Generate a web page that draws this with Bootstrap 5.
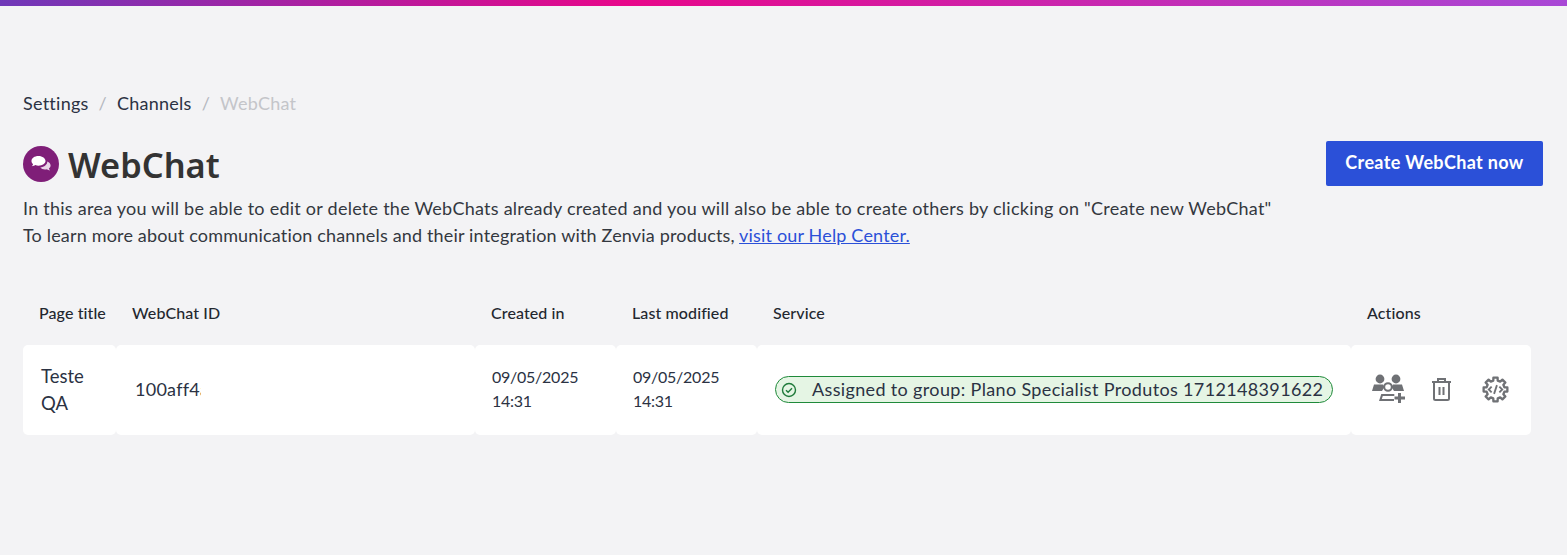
<!DOCTYPE html>
<html lang="en">
<head>
    <meta charset="UTF-8">
    <meta name="viewport" content="width=device-width, initial-scale=1.0">
    <title>WebChat</title>
    <link href="https://cdn.jsdelivr.net/npm/bootstrap@5.3.0/dist/css/bootstrap.min.css" rel="stylesheet">
    <style>
        html, body { height: 100%; }
        body { background: #f3f3f5; font-family: "Lato", "Noto Sans", sans-serif; color: #2b3243; overflow: hidden; }
        .top-strip { height: 6px; background: linear-gradient(90deg, #6f38b8 0%, #e8078a 40%, #a848d6 100%); }
        .page-area { padding: 86px 24px 0 23px; }
        .crumbs { font-size: 18px; letter-spacing: .25px; line-height: 22px; margin-bottom: 0; --bs-breadcrumb-divider-color: #b5b8bf; --bs-breadcrumb-item-padding-x: 10px; }
        .crumbs a { color: #2b3243; text-decoration: none; }
        .crumbs .active { color: #c4c5c9; }
        .head-row { margin-top: 27px; }
        .title-icon { width: 36px; height: 36px; border-radius: 50%; background: #7f1e78; flex: none; margin-top: 5px; }
        .title-text { font-family: "Noto Sans", sans-serif; font-size: 34.4px; font-weight: 600; line-height: 48px; color: #333; margin: 0 0 0 9px; }
        .btn-create { background: #2b50d8; border: 0; border-radius: 2px; color: #fff; font-weight: 700; font-size: 18px; letter-spacing: .35px; width: 217px; height: 45px; padding: 0 0 2px; }
        .intro { font-size: 18px; letter-spacing: .25px; line-height: 27px; color: #33383f; margin-top: 6px; }
        .intro-second { letter-spacing: .17px; }
        .intro a { color: #2b50d8; }
        .list-wrap { margin-top: 32px; width: 1508px; }
        .chan-table { table-layout: fixed; width: 1508px; margin: 0; --bs-table-bg: transparent; }
        .chan-table > :not(caption) > * > * { border: 0; box-shadow: none; }
        .chan-table th { font-size: 16px; letter-spacing: .1px; font-weight: 500; color: #23272f; padding: 0 0 0 16px; height: 64px; line-height: 24px; vertical-align: middle; }
        .chan-table td { background: #fff; height: 90px; padding: 0 18px; vertical-align: middle; font-size: 18.5px; line-height: 27px; color: #2b3243; border-radius: 5px; }
        .col-title { width: 93px; }
        .col-id { width: 359px; }
        .col-date { width: 141px; }
        .col-service { width: 594px; }
        .col-actions { width: 180px; }
        .chan-table td.id-cell { padding: 0 0 2px 19px; }
        .id-clip { display: block; width: 66px; overflow: hidden; white-space: nowrap; font-size: 18px; letter-spacing: .25px; }
        .chan-table td.date-cell { font-size: 16px; letter-spacing: -.25px; line-height: 24px; padding: 0 17px 2px; }
        .status-pill { display: flex; align-items: center; height: 27px; width: 558px; border: 1px solid #1f8a3a; border-radius: 14px; background: #e5f5e4; padding-left: 5px; font-size: 18px; letter-spacing: .35px; white-space: nowrap; margin-bottom: 1px; }
        .status-pill svg { margin-right: 15px; flex: none; }
        .chan-table td.act-cell { padding: 0 0 2px 20px; }
        .act-row { gap: 25px; }
        .act-gear { margin-left: 5px; }
    </style>
</head>
<body>
    <div class="top-strip"></div>
    <div class="page-area">
        <nav aria-label="breadcrumb">
            <ol class="breadcrumb crumbs">
                <li class="breadcrumb-item"><a href="#">Settings</a></li>
                <li class="breadcrumb-item"><a href="#">Channels</a></li>
                <li class="breadcrumb-item active" aria-current="page">WebChat</li>
            </ol>
        </nav>

        <div class="head-row d-flex justify-content-between align-items-start">
            <div class="d-flex align-items-start">
                <div class="title-icon d-flex align-items-center justify-content-center">
                    <svg width="24" height="20" viewBox="0 0 24 20">
                        <path d="M9.5 2C5.4 2 2.5 4.2 2.5 7c0 1.3.6 2.4 1.6 3.2-.3 1-1 1.700-1.300 2 1.300 0 2.600-.5 3.500-1.100 1 .4 2.100.6 3.200.6 4 0 7-2.200 7-4.700S13.500 2 9.500 2z" fill="#fff"/>
                        <path d="M18.300 7.600c.1 3-3 5.600-7 6 1 1.200 2.700 2 4.700 2 .7 0 1.400-.1 2-.3.7.6 1.800 1.100 3 1.100-.4-.4-.9-1.100-1.100-1.900 1.100-.8 1.700-1.800 1.700-3 0-1.700-1.400-3.200-3.300-3.900z" fill="#e9d4e8"/>
                    </svg>
                </div>
                <h1 class="title-text">WebChat</h1>
            </div>
            <button class="btn btn-create" type="button">Create WebChat now</button>
        </div>

        <div class="intro">
            In this area you will be able to edit or delete the WebChats already created and you will also be able to create others by clicking on "Create new WebChat"<br>
            <span class="intro-second">To learn more about communication channels and their integration with Zenvia products, <a href="#">visit our Help Center.</a></span>
        </div>

        <div class="list-wrap">
            <table class="table chan-table">
                <colgroup>
                    <col class="col-title">
                    <col class="col-id">
                    <col class="col-date">
                    <col class="col-date">
                    <col class="col-service">
                    <col class="col-actions">
                </colgroup>
                <thead>
                    <tr>
                        <th>Page title</th>
                        <th>WebChat ID</th>
                        <th>Created in</th>
                        <th>Last modified</th>
                        <th>Service</th>
                        <th>Actions</th>
                    </tr>
                </thead>
                <tbody>
                    <tr>
                        <td>Teste QA</td>
                        <td class="id-cell"><span class="id-clip">100aff4a7c2e</span></td>
                        <td class="date-cell">09/05/2025 14:31</td>
                        <td class="date-cell">09/05/2025 14:31</td>
                        <td>
                            <div class="status-pill">
                                <svg width="16" height="16" viewBox="0 0 16 16" fill="none">
                                    <circle cx="8" cy="8" r="6.5" stroke="#1f7a3a" stroke-width="1.4"/>
                                    <path d="M5 8.2l2.1 2.1L11 6.2" stroke="#1f7a3a" stroke-width="1.4"/>
                                </svg>
                                Assigned to group: Plano Specialist Produtos 1712148391622
                            </div>
                        </td>
                        <td class="act-cell">
                            <div class="d-flex align-items-center act-row">
                                <svg width="35" height="30" viewBox="0 0 35 30" fill="#6f7175">
                                    <circle cx="9" cy="5" r="4.4"/>
                                    <circle cx="25" cy="5" r="4.4"/>
                                    <path d="M1 17l2-6.500h9l1.500 2.500-2.500 4zM23 17l-2.500-4 1.500-2.500h9l2 6.500z"/>
                                    <circle cx="17" cy="13" r="3.800" fill="#fff" stroke="#6f7175" stroke-width="2"/>
                                    <path d="M8 27l2.300-7h13v2H11.800l-1 3H23v2z"/>
                                    <path d="M27 19h3v3.500h4v3h-4V29h-3v-3.500h-3.500v-3H27z"/>
                                </svg>
                                <svg width="21" height="24" viewBox="0 0 21 24" fill="none" stroke="#6f7175" stroke-width="2">
                                    <path d="M1 5h19M7 5V2h7v3M3 5v16.500A1.500 1.500 0 0 0 4.500 23h12a1.500 1.500 0 0 0 1.500-1.500V5M8.500 10v8M12.500 10v8"/>
                                </svg>
                                <svg class="act-gear" width="27" height="27" viewBox="-14 -14 28 28" fill="none" stroke="#6f7175">
                                    <path stroke-width="2.4" stroke-linejoin="round" d="M-2.3-9.22-2.17-12.31 2.17-12.31 2.3-9.22 4.89-8.15 7.17-10.24 10.24-7.17 8.15-4.89 9.22-2.3 12.31-2.17 12.31 2.17 9.22 2.3 8.15 4.89 10.24 7.17 7.17 10.24 4.89 8.15 2.3 9.22 2.17 12.31-2.17 12.31-2.3 9.22-4.89 8.15-7.17 10.24-10.24 7.17-8.15 4.89-9.22 2.3-12.31 2.17-12.31-2.17-9.22-2.3-8.15-4.89-10.24-7.17-7.17-10.24-4.89-8.15Z"/>
                                    <path stroke-width="1.9" d="M-4-3-7 0l3 3M4-3 7 0 4 3M1.500-4.500-1.500 4.500"/>
                                </svg>
                            </div>
                        </td>
                    </tr>
                </tbody>
            </table>
        </div>
    </div>
</body>
</html>
